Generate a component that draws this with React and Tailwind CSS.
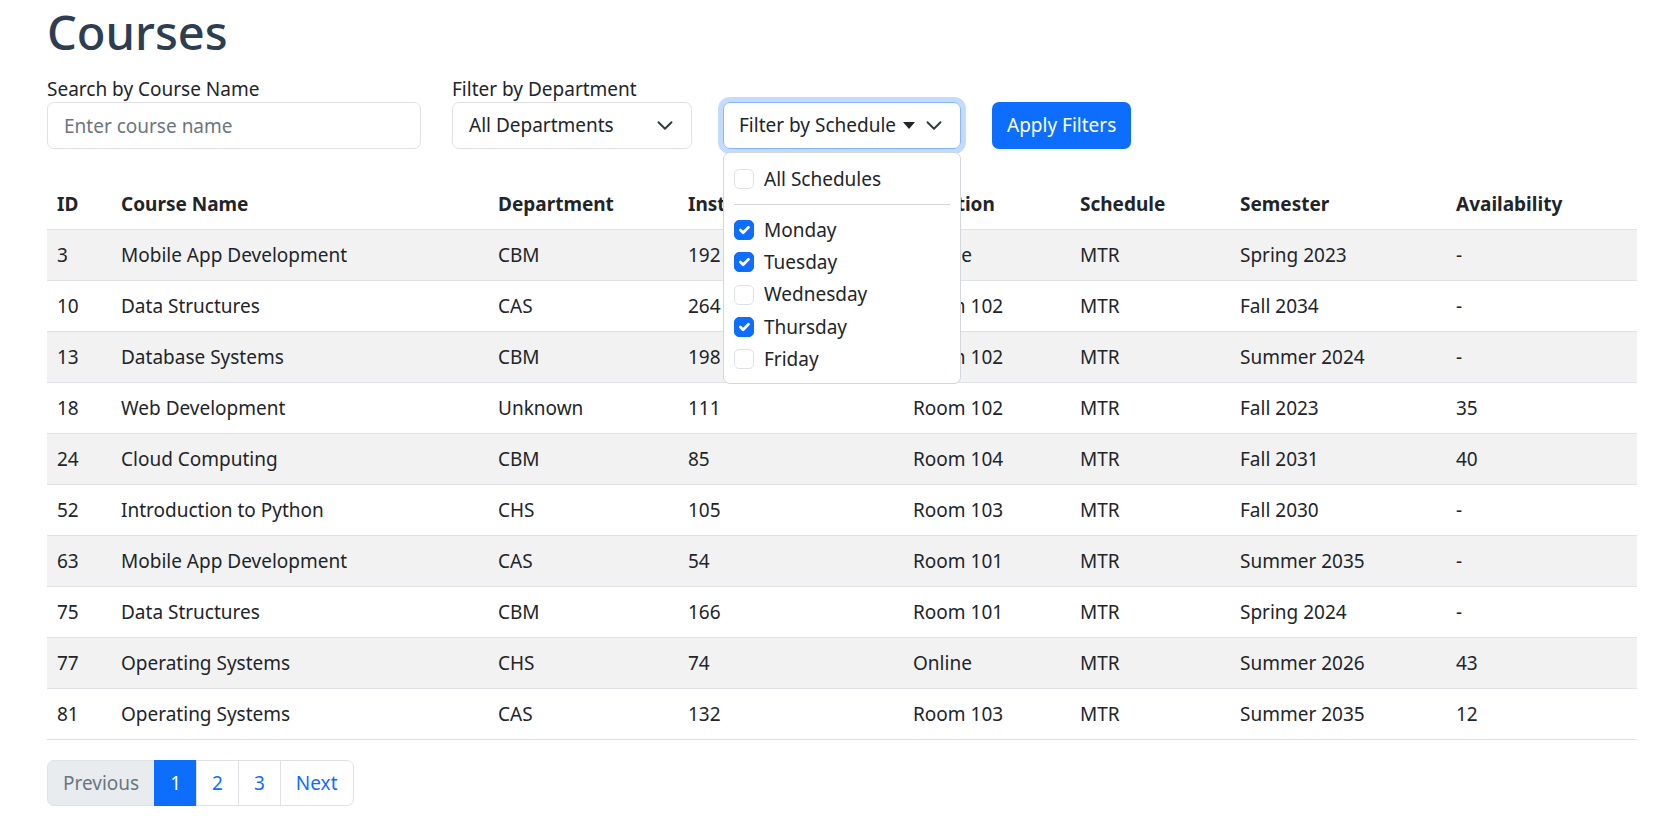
import { useState } from "react";

const courses = [
    { id: 3, name: "Mobile App Development", dept: "CBM", instructor: "192", location: "Online", schedule: "MTR", semester: "Spring 2023", availability: "-" },
    { id: 10, name: "Data Structures", dept: "CAS", instructor: "264", location: "Room 102", schedule: "MTR", semester: "Fall 2034", availability: "-" },
    { id: 13, name: "Database Systems", dept: "CBM", instructor: "198", location: "Room 102", schedule: "MTR", semester: "Summer 2024", availability: "-" },
    { id: 18, name: "Web Development", dept: "Unknown", instructor: "111", location: "Room 102", schedule: "MTR", semester: "Fall 2023", availability: "35" },
    { id: 24, name: "Cloud Computing", dept: "CBM", instructor: "85", location: "Room 104", schedule: "MTR", semester: "Fall 2031", availability: "40" },
    { id: 52, name: "Introduction to Python", dept: "CHS", instructor: "105", location: "Room 103", schedule: "MTR", semester: "Fall 2030", availability: "-" },
    { id: 63, name: "Mobile App Development", dept: "CAS", instructor: "54", location: "Room 101", schedule: "MTR", semester: "Summer 2035", availability: "-" },
    { id: 75, name: "Data Structures", dept: "CBM", instructor: "166", location: "Room 101", schedule: "MTR", semester: "Spring 2024", availability: "-" },
    { id: 77, name: "Operating Systems", dept: "CHS", instructor: "74", location: "Online", schedule: "MTR", semester: "Summer 2026", availability: "43" },
    { id: 81, name: "Operating Systems", dept: "CAS", instructor: "132", location: "Room 103", schedule: "MTR", semester: "Summer 2035", availability: "12" },
];

const days = ["Monday", "Tuesday", "Wednesday", "Thursday", "Friday"];

function Chevron() {
    return (
        <svg width="18" height="13" viewBox="0 0 16 12" className="shrink-0">
            <path d="m2 3 6 6 6-6" fill="none" stroke="#343a40" strokeWidth="1.8" strokeLinecap="round" strokeLinejoin="round" />
        </svg>
    );
}

function Checkbox({ checked }) {
    return (
        <span
            className={
                checked
                    ? "flex h-[20px] w-[20px] shrink-0 items-center justify-center rounded-[5px] border border-[#0d6efd] bg-[#0d6efd]"
                    : "flex h-[20px] w-[20px] shrink-0 items-center justify-center rounded-[5px] border border-[#dee2e6] bg-white"
            }
        >
            {checked && (
                <svg width="18" height="18" viewBox="0 0 20 20">
                    <path d="m6 10 3 3 6-6" fill="none" stroke="#fff" strokeWidth="3" strokeLinecap="round" strokeLinejoin="round" />
                </svg>
            )}
        </span>
    );
}

export default function App() {
    const [checkedDays, setCheckedDays] = useState({ Monday: true, Tuesday: true, Wednesday: false, Thursday: true, Friday: false });

    const toggleDay = (day) => {
        setCheckedDays({ ...checkedDays, [day]: !checkedDays[day] });
    };

    return (
        <div className="min-h-screen bg-white pl-[47px] pr-[27px] pt-[4px] font-['Noto_Sans',sans-serif] text-[19px] text-[#212529]">
            <h1 className="mb-[12px] text-[47px] font-medium leading-[56px] text-[#2c3e50]">Courses</h1>

            <div className="flex items-end gap-[31px]">
                <div className="flex w-[374px] flex-col">
                    <label className="pt-[4px] leading-[26px]">Search by Course Name</label>
                    <input
                        type="text"
                        placeholder="Enter course name"
                        className="h-[47px] rounded-[7px] border border-[#dee2e6] px-[16px] text-[19px] placeholder:text-[#6c757d] focus:outline-none"
                    />
                </div>

                <div className="flex w-[240px] flex-col">
                    <label className="pt-[4px] leading-[26px]">Filter by Department</label>
                    <div className="flex h-[47px] items-center justify-between rounded-[7px] border border-[#dee2e6] pl-[16px] pr-[17px]">
                        <span>All Departments</span>
                        <Chevron />
                    </div>
                </div>

                <div className="relative w-[238px]">
                    <div className="flex h-[47px] items-center whitespace-nowrap rounded-[7px] border border-[#86b7fe] pl-[15px] pr-[17px] shadow-[0_0_0_5px_rgba(13,110,253,0.25)]">
                        <span>Filter by Schedule</span>
                        <span className="ml-auto mr-[10px] h-0 w-0 border-x-[6px] border-t-[7px] border-x-transparent border-t-[#212529]" />
                        <Chevron />
                    </div>

                    <div className="absolute left-0 top-[50px] z-10 w-[238px] rounded-[7px] border border-[#d3d6da] bg-white px-[10px] pb-[8px] pt-[10px]">
                        <div className="flex h-[32px] items-center gap-[10px]">
                            <Checkbox checked={false} />
                            <span>All Schedules</span>
                        </div>
                        <div className="my-[9px] border-t border-[#d3d6da]" />
                        {days.map((day) => (
                            <div key={day} onClick={() => toggleDay(day)} className="flex h-[32.25px] cursor-pointer items-center gap-[10px]">
                                <Checkbox checked={checkedDays[day]} />
                                <span>{day}</span>
                            </div>
                        ))}
                    </div>
                </div>

                <button className="h-[47px] rounded-[7px] bg-[#0d6efd] px-[15px] text-white">Apply Filters</button>
            </div>

            <table className="mt-[30px] w-[1590px] table-fixed border-collapse text-left">
                <colgroup>
                    <col className="w-[64px]" />
                    <col className="w-[377px]" />
                    <col className="w-[190px]" />
                    <col className="w-[225px]" />
                    <col className="w-[167px]" />
                    <col className="w-[160px]" />
                    <col className="w-[216px]" />
                    <col className="w-[191px]" />
                </colgroup>
                <thead>
                    <tr className="border-b border-[#dee2e6]">
                        <th className="px-[10px] py-[10px] font-bold leading-[30px]">ID</th>
                        <th className="px-[10px] py-[10px] font-bold leading-[30px]">Course Name</th>
                        <th className="px-[10px] py-[10px] font-bold leading-[30px]">Department</th>
                        <th className="px-[10px] py-[10px] font-bold leading-[30px]">Instructor</th>
                        <th className="px-[10px] py-[10px] font-bold leading-[30px]">Location</th>
                        <th className="px-[10px] py-[10px] font-bold leading-[30px]">Schedule</th>
                        <th className="px-[10px] py-[10px] font-bold leading-[30px]">Semester</th>
                        <th className="px-[10px] py-[10px] font-bold leading-[30px]">Availability</th>
                    </tr>
                </thead>
                <tbody>
                    {courses.map((course, index) => (
                        <tr key={course.id} className={index % 2 === 0 ? "border-b border-[#dee2e6] bg-[#f2f2f2]" : "border-b border-[#dee2e6] bg-white"}>
                            <td className="px-[10px] py-[10px] leading-[30px]">{course.id}</td>
                            <td className="px-[10px] py-[10px] leading-[30px]">{course.name}</td>
                            <td className="px-[10px] py-[10px] leading-[30px]">{course.dept}</td>
                            <td className="px-[10px] py-[10px] leading-[30px]">{course.instructor}</td>
                            <td className="px-[10px] py-[10px] leading-[30px]">{course.location}</td>
                            <td className="px-[10px] py-[10px] leading-[30px]">{course.schedule}</td>
                            <td className="px-[10px] py-[10px] leading-[30px]">{course.semester}</td>
                            <td className="px-[10px] py-[10px] leading-[30px]">{course.availability}</td>
                        </tr>
                    ))}
                </tbody>
            </table>

            <div className="mt-[20px] flex">
                <span className="rounded-l-[7px] border border-[#dee2e6] bg-[#e9ecef] px-[15px] py-[7px] leading-[30px] text-[#6c757d]">Previous</span>
                <span className="-ml-px border border-[#0d6efd] bg-[#0d6efd] px-[15px] py-[7px] leading-[30px] text-white">1</span>
                <span className="-ml-px border border-[#dee2e6] bg-white px-[15px] py-[7px] leading-[30px] text-[#0d6efd]">2</span>
                <span className="-ml-px border border-[#dee2e6] bg-white px-[15px] py-[7px] leading-[30px] text-[#0d6efd]">3</span>
                <span className="-ml-px rounded-r-[7px] border border-[#dee2e6] bg-white px-[15px] py-[7px] leading-[30px] text-[#0d6efd]">Next</span>
            </div>
        </div>
    );
}
